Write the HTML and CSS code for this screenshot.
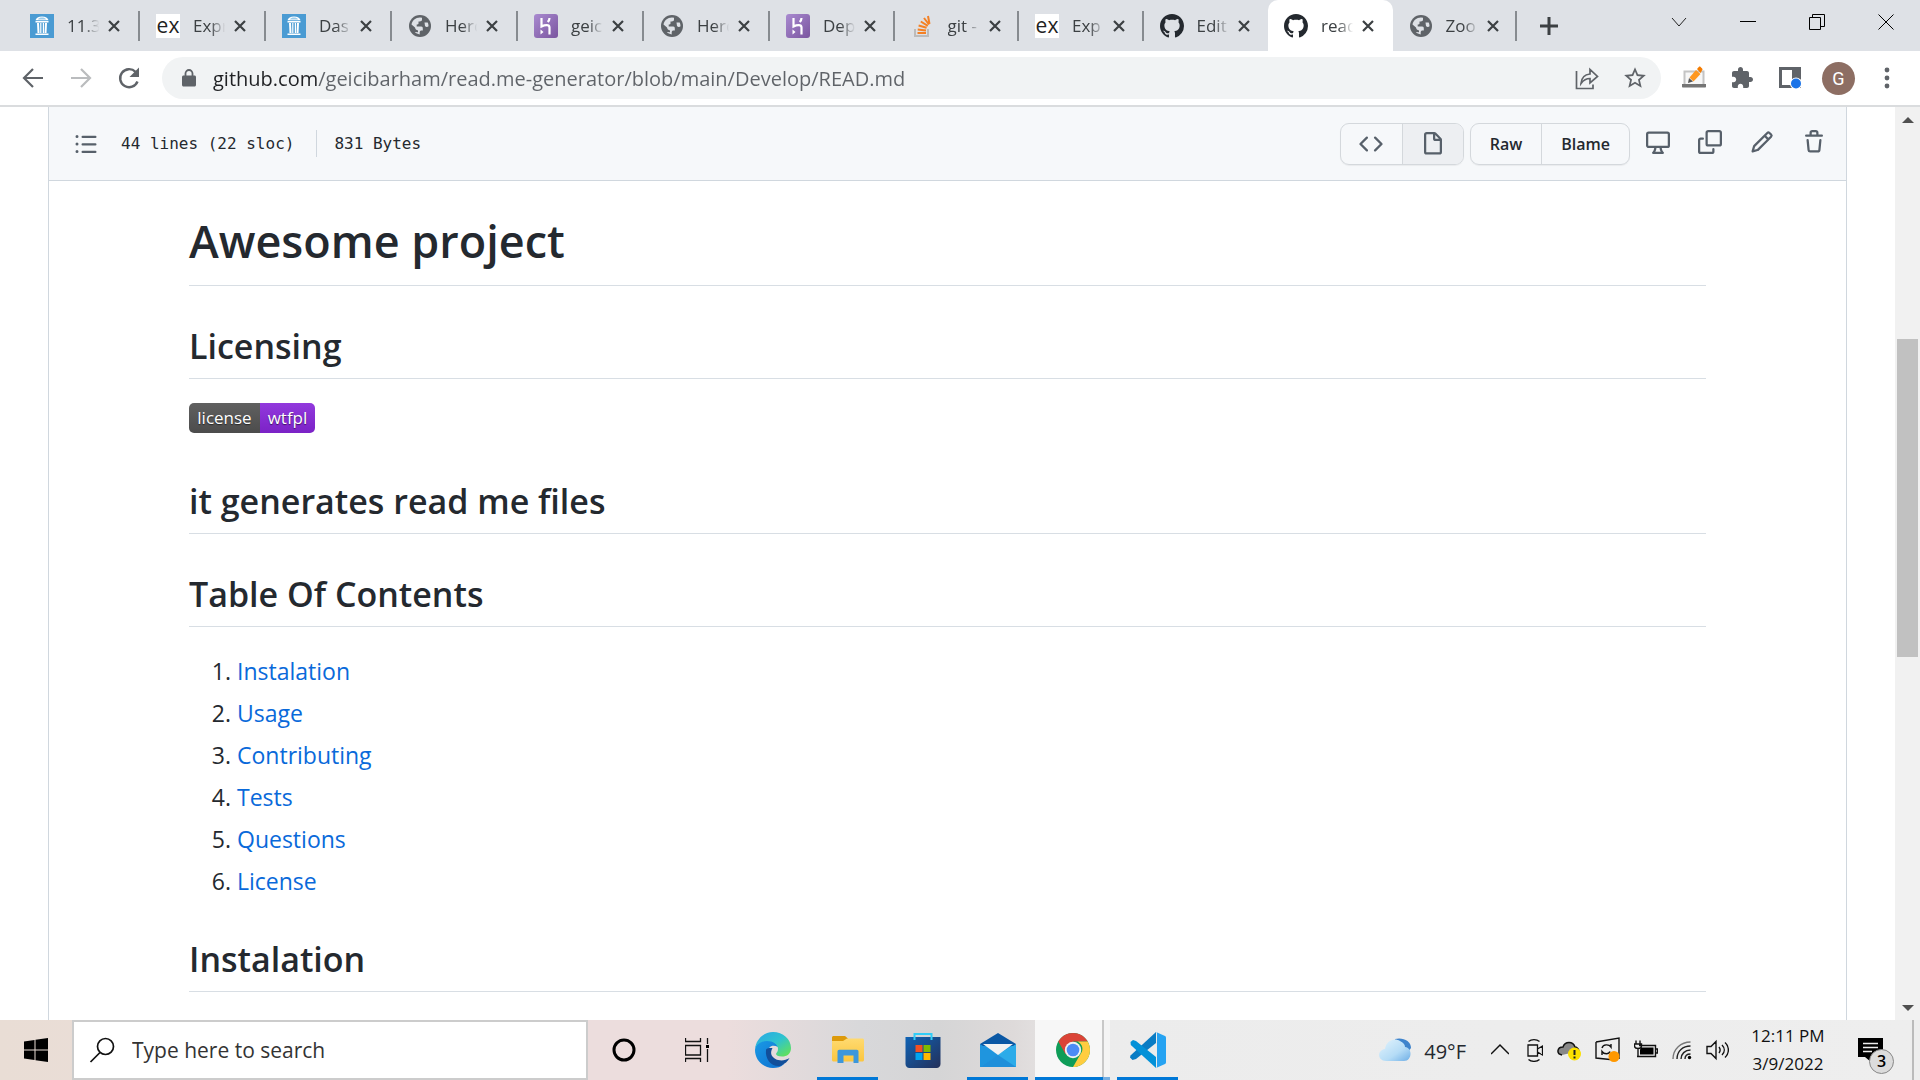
FILE: index.html
```html
<!DOCTYPE html>
<html lang="en">
<head>
<meta charset="utf-8">
<title>read.me-generator/READ.md</title>
<link rel="stylesheet" href="styles.css">
</head>
<body>
<svg class="sprite" aria-hidden="true">
  <defs>
    <linearGradient id="g-heroku" x1="0" y1="0" x2="1" y2="1"><stop offset="0" stop-color="#a98ad0"/><stop offset="1" stop-color="#7a559f"/></linearGradient>
    <linearGradient id="g-edge-top" x1="0" y1="0" x2="1" y2="1"><stop offset="0" stop-color="#2aa6e6"/><stop offset=".5" stop-color="#2fc3cf"/><stop offset="1" stop-color="#6be646"/></linearGradient>
    <linearGradient id="g-edge-low" x1="0" y1="0" x2="1" y2="1"><stop offset="0" stop-color="#1a9be6"/><stop offset="1" stop-color="#0f6fce"/></linearGradient>
    <linearGradient id="g-store" x1="0" y1="0" x2="1" y2="1"><stop offset="0" stop-color="#0f63b5"/><stop offset="1" stop-color="#24305a"/></linearGradient>
    <linearGradient id="g-cloud" x1="0" y1="0" x2="1" y2="1"><stop offset="0" stop-color="#e4f4fd"/><stop offset=".6" stop-color="#b5dcf6"/><stop offset="1" stop-color="#6eaee6"/></linearGradient>
    <linearGradient id="g-folder" x1="0" y1="0" x2="0" y2="1"><stop offset="0" stop-color="#ffda70"/><stop offset="1" stop-color="#fbc63f"/></linearGradient>
  </defs>
  <symbol id="i-canvas" viewBox="0 0 24 24"><path fill="#4a9bd3" d="M0 0h24v24H0z"/><path fill="#fff" d="M12 2.500c3.500 0 6 1.600 6.500 3.800h-13C6 4.100 8.500 2.500 12 2.500zM5.500 7h13v1.500h-13zM7 9h2l.5 10H7.500zM10.200 9h1.200v10h-1.200zM12.800 9H14v10h-1.200zM15 9h2l-.5 10h-2zM5.500 19.500h13V21h-13z"/><path fill="#9ccbea" d="M8 5.500C8.500 4 10 3.500 12 3.500s3.500.5 4 2z"/></symbol>
  <symbol id="i-globe" viewBox="0 0 24 24"><circle cx="12" cy="12" r="11" fill="#5f6368"/><path fill="#dee1e6" d="M3.500 10.500C4.200 6.500 7.500 3.600 12 3.500l2 .2v2.100c0 1-1 1.700-2.300 1.700h-1.200v2c0 .8-.8 1-1.800 1v2h4.500c1.300 0 1.600.7 1.600 2v2h-1.700c-1 0-1.400 1-1.400 2v1.900c-2-.1-3.500-1-4.900-2.300l3.200.2v-1.800c-1.800-.5-2.800-1.500-3-3zM16.500 8.500h3.200c.7 1.600.8 2.600.8 3.800-.8 1-2.700 1-3.500-.3z"/></symbol>
  <symbol id="i-heroku" viewBox="0 0 24 24"><rect width="24" height="24" rx="3" fill="url(#g-heroku)"/><path d="M7.500 4v8.500c3-1.500 8-2.500 8 1v7M15.500 4c0 1.700-.8 3-1.800 4" fill="none" stroke="#fff" stroke-width="2.200"/><path fill="#fff" d="M6.500 15.500l3 2.500-3 2.500z"/></symbol>
  <symbol id="i-stack" viewBox="0 0 24 24"><path d="M4 15v7h13v-7" fill="none" stroke="#bcbbbb" stroke-width="2"/><path stroke="#f48024" stroke-width="2" d="M6.500 19h8.500M6.700 15.500l8.300.9M7.600 11.500l8 2.200M9.800 7.500l7 4.300M13 4l5 6.500M17 2l1.500 8"/></symbol>
  <symbol id="i-github" viewBox="0 0 16 16"><path fill="#24292f" d="M8 0C3.580 0 0 3.580 0 8c0 3.540 2.290 6.530 5.470 7.590.4.070.55-.17.55-.38 0-.19-.01-.82-.01-1.490-2.010.37-2.530-.49-2.690-.94-.09-.23-.48-.94-.82-1.130-.28-.15-.68-.52-.01-.53.63-.01 1.080.58 1.230.82.72 1.210 1.870.87 2.330.66.07-.52.28-.87.51-1.070-1.780-.2-3.640-.89-3.640-3.950 0-.87.31-1.590.82-2.150-.08-.2-.36-1.020.08-2.120 0 0 .67-.21 2.200.82.64-.18 1.320-.27 2-.27s1.360.09 2 .27c1.530-1.040 2.200-.82 2.200-.82.44 1.100.16 1.920.08 2.120.51.56.82 1.270.82 2.150 0 3.070-1.870 3.750-3.650 3.950.29.25.54.73.54 1.480 0 1.070-.01 1.930-.01 2.200 0 .21.15.46.55.38A8.010 8.010 0 0016 8c0-4.420-3.580-8-8-8z"/></symbol>
  <symbol id="i-x" viewBox="0 0 14 14"><path d="M2 2l10 10M12 2L2 12" stroke="#3c4043" stroke-width="2.200"/></symbol>
</svg>

<header class="tabstrip">
  <nav class="tabs" aria-label="Tabs">
    <div class="tab"><svg class="favicon"><use href="#i-canvas"/></svg><span class="tab-title">11.3</span><button class="tab-close" aria-label="Close tab"><svg><use href="#i-x"/></svg></button></div>
    <div class="tab"><span class="favicon favicon-ex">ex</span><span class="tab-title">Expr</span><button class="tab-close" aria-label="Close tab"><svg><use href="#i-x"/></svg></button></div>
    <div class="tab"><svg class="favicon"><use href="#i-canvas"/></svg><span class="tab-title">Das</span><button class="tab-close" aria-label="Close tab"><svg><use href="#i-x"/></svg></button></div>
    <div class="tab"><svg class="favicon"><use href="#i-globe"/></svg><span class="tab-title">Hero</span><button class="tab-close" aria-label="Close tab"><svg><use href="#i-x"/></svg></button></div>
    <div class="tab"><svg class="favicon"><use href="#i-heroku"/></svg><span class="tab-title">geic</span><button class="tab-close" aria-label="Close tab"><svg><use href="#i-x"/></svg></button></div>
    <div class="tab"><svg class="favicon"><use href="#i-globe"/></svg><span class="tab-title">Hero</span><button class="tab-close" aria-label="Close tab"><svg><use href="#i-x"/></svg></button></div>
    <div class="tab"><svg class="favicon"><use href="#i-heroku"/></svg><span class="tab-title">Dep</span><button class="tab-close" aria-label="Close tab"><svg><use href="#i-x"/></svg></button></div>
    <div class="tab"><svg class="favicon"><use href="#i-stack"/></svg><span class="tab-title">git -</span><button class="tab-close" aria-label="Close tab"><svg><use href="#i-x"/></svg></button></div>
    <div class="tab"><span class="favicon favicon-ex">ex</span><span class="tab-title">Exp</span><button class="tab-close" aria-label="Close tab"><svg><use href="#i-x"/></svg></button></div>
    <div class="tab tab-before"><svg class="favicon"><use href="#i-github"/></svg><span class="tab-title">Edit</span><button class="tab-close" aria-label="Close tab"><svg><use href="#i-x"/></svg></button></div>
    <div class="tab tab-active"><svg class="favicon"><use href="#i-github"/></svg><span class="tab-title">read</span><button class="tab-close" aria-label="Close tab"><svg><use href="#i-x"/></svg></button></div>
    <div class="tab"><svg class="favicon"><use href="#i-globe"/></svg><span class="tab-title">Zoo</span><button class="tab-close" aria-label="Close tab"><svg><use href="#i-x"/></svg></button></div>
  </nav>
  <div class="strip-end">
    <button class="new-tab" aria-label="New tab"><svg width="18" height="18" viewBox="0 0 18 18"><path d="M9 0v18M0 9h18" stroke="#3c4043" stroke-width="3"/></svg></button>
    <div class="window-buttons">
      <button aria-label="Search tabs"><svg width="16" height="16" viewBox="0 0 16 16"><path d="M1 4l7 8 7-8" fill="none" stroke="#222"/></svg></button>
      <button aria-label="Minimize"><svg width="16" height="16" viewBox="0 0 16 16"><path d="M0 7.500h16" stroke="#000"/></svg></button>
      <button aria-label="Restore"><svg width="16" height="16" viewBox="0 0 16 16"><path d="M.5 3.500h11v12H.5zM3.500 3.500v-3h12v12h-4" fill="none" stroke="#000"/></svg></button>
      <button aria-label="Close"><svg width="16" height="16" viewBox="0 0 16 16"><path d="M0.500 .5l15 15M15.500 .5l-15 15" stroke="#000"/></svg></button>
    </div>
  </div>
</header>

<div class="toolbar">
  <div class="nav-buttons">
    <button aria-label="Back"><svg width="24" height="24" viewBox="0 0 24 24"><path d="M22 12H3M12 3l-9 9 9 9" fill="none" stroke="#5f6368" stroke-width="2.200"/></svg></button>
    <button aria-label="Forward"><svg width="24" height="24" viewBox="0 0 24 24"><path d="M2 12h19M12 3l9 9-9 9" fill="none" stroke="#babcbe" stroke-width="2.200"/></svg></button>
    <button aria-label="Reload"><svg width="24" height="24" viewBox="0 0 24 24"><path d="M20.500 15.500A9 9 0 1 1 18.500 5.800" fill="none" stroke="#5f6368" stroke-width="2.400"/><path d="M22 1.500V11h-9.500z" fill="#5f6368"/></svg></button>
  </div>
  <form class="omnibox">
    <svg width="14" height="18" viewBox="0 0 14 18"><path fill="#5f6368" d="M1.500 6.500h11c.8 0 1.500.7 1.500 1.500v8c0 .8-.7 1.500-1.500 1.500h-11C.7 17.500 0 16.800 0 16V8c0-.8.7-1.500 1.500-1.500z"/><path d="M3.500 7V4.500a3.500 3.500 0 0 1 7 0V7" fill="none" stroke="#5f6368" stroke-width="1.800"/></svg>
    <input class="url" type="text" aria-label="Address" value="github.com/geicibarham/read.me-generator/blob/main/Develop/READ.md">
    <button type="button" aria-label="Share"><svg width="24" height="24" viewBox="0 0 24 24"><path d="M1.500 5v17.500H18v-4M6 17.500c.5-6 3.500-9 9-9.500V3.500l7.500 7-7.500 6.500v-4.500c-4 0-6.500 1.500-9 5z" fill="none" stroke="#5f6368" stroke-width="1.700"/></svg></button>
    <button type="button" aria-label="Bookmark"><svg width="26" height="26" viewBox="0 0 24 24"><path fill="#5f6368" d="M22 9.240l-7.190-.62L12 2 9.190 8.630 2 9.240l5.460 4.730L5.820 21 12 17.270 18.180 21l-1.630-7.030L22 9.240zM12 15.400l-3.760 2.270 1-4.280-3.320-2.880 4.380-.38L12 6.100l1.710 4.040 4.380.38-3.320 2.880 1 4.280L12 15.400z"/></svg></button>
  </form>
  <div class="extensions">
    <button aria-label="Page editor"><svg width="24" height="24" viewBox="0 0 24 24"><path d="M2.500 18V5.500h19V18" fill="#f7f7f7" stroke="#c4c4c4" stroke-width="2"/><path fill="#757575" d="M0 18h24v2.500c0 .6-.4 1-1 1H1c-.6 0-1-.4-1-1z"/><path fill="#ff9820" d="M14 4l4.500 4-7 7.500-4-4z"/><path fill="#555" d="M7 12l4 3.500-5 1.500z"/><path fill="#f57c00" d="M15 3l1.800-2c.5-.6 1.200-.6 1.800 0l1.500 1.500c.6.600.6 1.200 0 1.800L18.500 7z"/></svg></button>
    <button aria-label="Extensions"><svg width="24" height="24" viewBox="0 0 24 24"><path fill="#5f6368" d="M20.500 11H19V7c0-1.100-.9-2-2-2h-4V3.500C13 2.120 11.880 1 10.500 1S8 2.120 8 3.500V5H4c-1.100 0-1.990.9-1.990 2v3.800H3.500c1.490 0 2.700 1.210 2.700 2.700s-1.210 2.700-2.700 2.700H2V20c0 1.100.9 2 2 2h3.800v-1.500c0-1.490 1.210-2.700 2.700-2.700 1.490 0 2.700 1.210 2.700 2.700V22H17c1.100 0 2-.9 2-2v-4h1.500c1.380 0 2.500-1.120 2.500-2.500S21.880 11 20.500 11z"/></svg></button>
    <button aria-label="Side panel"><svg width="24" height="24" viewBox="0 0 24 24"><path fill="#5f6368" fill-rule="evenodd" d="M1 1h22v21H1zM4 4v15h10V4z"/><circle cx="18" cy="17.500" r="6" fill="#fff"/><circle cx="18" cy="17.500" r="5" fill="#1a73e8"/></svg></button>
    <button class="avatar" aria-label="Profile">G</button>
    <button aria-label="Menu"><svg width="24" height="24" viewBox="0 0 24 24" fill="#5f6368"><circle cx="12" cy="4" r="2.400"/><circle cx="12" cy="12" r="2.400"/><circle cx="12" cy="20" r="2.400"/></svg></button>
  </div>
</div>

<div class="viewport">
  <main class="page">
    <section class="file-box">
      <div class="file-header">
        <div class="file-info">
          <button class="icon-button" aria-label="Outline"><svg width="24" height="24" viewBox="0 0 16 16"><path d="M2 4a1 1 0 100-2 1 1 0 000 2zm3.750-1.500a.75.75 0 000 1.500h8.500a.75.75 0 000-1.500h-8.500zm0 5a.75.75 0 000 1.500h8.500a.75.75 0 000-1.500h-8.500zm0 5a.75.75 0 000 1.500h8.500a.75.75 0 000-1.500h-8.500zM3 8a1 1 0 11-2 0 1 1 0 012 0zm-1 6a1 1 0 100-2 1 1 0 000 2z"/></svg></button>
          <span class="lines">44 lines (22 sloc)</span>
          <span class="bytes">831 Bytes</span>
        </div>
        <div class="file-actions">
          <div class="button-group">
            <button class="view-button" aria-label="Source"><svg width="24" height="24" viewBox="0 0 16 16"><path d="M4.720 3.220a.75.75 0 011.060 1.060L2.060 8l3.720 3.720a.75.75 0 11-1.060 1.060L.47 8.530a.75.75 0 010-1.060l4.250-4.250zm6.560 0a.75.75 0 10-1.060 1.060L13.940 8l-3.720 3.720a.75.75 0 101.060 1.060l4.250-4.250a.75.75 0 000-1.060l-4.250-4.250z"/></svg></button>
            <button class="view-button selected" aria-label="Rendered"><svg width="24" height="24" viewBox="0 0 16 16"><path d="M3.750 1.500a.25.25 0 00-.25.25v11.500c0 .138.112.25.25.25h8.500a.25.25 0 00.25-.25V6H9.750A1.750 1.750 0 018 4.250V1.500H3.750zm5.750.56v2.190c0 .138.112.25.25.25h2.190L9.500 2.060zM2 1.750C2 .784 2.784 0 3.750 0h5.086c.464 0 .909.184 1.237.513l3.414 3.414c.329.328.513.773.513 1.237v8.086A1.750 1.750 0 0112.250 15h-8.500A1.750 1.750 0 012 13.250V1.750z"/></svg></button>
          </div>
          <div class="button-group">
            <button class="text-button">Raw</button>
            <button class="text-button">Blame</button>
          </div>
          <div class="icon-row">
            <button class="icon-button" aria-label="Open in desktop"><svg width="24" height="24" viewBox="0 0 16 16"><path d="M1.750 2.500h12.500a.25.25 0 01.25.25v7.500a.25.25 0 01-.25.25H1.750a.25.25 0 01-.25-.25v-7.500a.25.25 0 01.25-.25zM14.250 1H1.750A1.750 1.750 0 000 2.750v7.500C0 11.216.784 12 1.750 12h3.727c-.1 1.041-.52 1.872-1.292 2.757A.75.75 0 004.750 16h6.500a.75.75 0 00.565-1.243c-.772-.885-1.193-1.716-1.292-2.757h3.727A1.750 1.750 0 0016 10.250v-7.500A1.750 1.750 0 0014.250 1zM9.018 12H6.982a5.720 5.720 0 01-.765 2.500h3.566a5.720 5.720 0 01-.765-2.500z" fill-rule="evenodd"/></svg></button>
            <button class="icon-button" aria-label="Copy"><svg width="24" height="24" viewBox="0 0 16 16"><path fill-rule="evenodd" d="M0 6.750C0 5.784.784 5 1.750 5h1.500a.75.75 0 010 1.500h-1.500a.25.25 0 00-.25.25v7.500c0 .138.112.25.25.25h7.500a.25.25 0 00.25-.25v-1.500a.75.75 0 011.500 0v1.500A1.750 1.750 0 019.250 16h-7.500A1.750 1.750 0 010 14.250v-7.500zM5 1.750C5 .784 5.784 0 6.750 0h7.500C15.216 0 16 .784 16 1.750v7.500A1.750 1.750 0 0114.250 11h-7.500A1.750 1.750 0 015 9.250v-7.500zm1.750-.25a.25.25 0 00-.25.25v7.500c0 .138.112.25.25.25h7.500a.25.25 0 00.25-.25v-7.500a.25.25 0 00-.25-.25h-7.500z"/></svg></button>
            <button class="icon-button" aria-label="Edit"><svg width="24" height="24" viewBox="0 0 16 16"><path fill-rule="evenodd" d="M11.013 1.427a1.750 1.750 0 012.474 0l1.086 1.086a1.750 1.750 0 010 2.474l-8.610 8.610c-.21.21-.47.364-.756.445l-3.251.93a.75.75 0 01-.927-.928l.929-3.250a1.750 1.750 0 01.445-.758l8.610-8.610zm1.414 1.060a.25.25 0 00-.354 0L10.811 3.750l1.439 1.440 1.263-1.263a.25.25 0 000-.354l-1.086-1.086zM11.189 6.250L9.750 4.810l-6.286 6.287a.25.25 0 00-.064.108l-.558 1.953 1.953-.558a.249.249 0 00.108-.064l6.286-6.286z"/></svg></button>
            <button class="icon-button" aria-label="Delete"><svg width="24" height="24" viewBox="0 0 16 16"><path fill-rule="evenodd" d="M6.500 1.750a.25.25 0 01.25-.25h2.500a.25.25 0 01.25.25V3h-3V1.750zm4.500 0V3h2.250a.75.75 0 010 1.500H2.750a.75.75 0 010-1.500H5V1.750C5 .784 5.784 0 6.750 0h2.500C10.216 0 11 .784 11 1.750zM4.496 6.675a.75.75 0 10-1.492.15l.66 6.600A1.750 1.750 0 005.405 15h5.190c.9 0 1.652-.681 1.741-1.576l.66-6.600a.75.75 0 00-1.492-.149l-.66 6.600a.25.25 0 01-.249.225h-5.190a.25.25 0 01-.249-.225l-.66-6.600z"/></svg></button>
          </div>
        </div>
      </div>
      <article class="markdown">
        <h1>Awesome project</h1>
        <h2>Licensing</h2>
        <p class="badge-line"><a class="badge" href="#license"><span class="badge-label">license</span><span class="badge-value">wtfpl</span></a></p>
        <h2>it generates read me files</h2>
        <h2>Table Of Contents</h2>
        <ol>
          <li><a href="#instalation">Instalation</a></li>
          <li><a href="#usage">Usage</a></li>
          <li><a href="#contributing">Contributing</a></li>
          <li><a href="#tests">Tests</a></li>
          <li><a href="#questions">Questions</a></li>
          <li><a href="#license">License</a></li>
        </ol>
        <h2 id="instalation">Instalation</h2>
      </article>
    </section>
  </main>
  <div class="scrollbar">
    <svg width="12" height="7" viewBox="0 0 12 7"><path d="M0 7l6-6 6 6z" fill="#505050"/></svg>
    <div class="track"><div class="thumb"></div></div>
    <svg width="12" height="7" viewBox="0 0 12 7"><path d="M0 0l6 6 6-6z" fill="#505050"/></svg>
  </div>
</div>

<footer class="taskbar">
  <button class="start" aria-label="Start"><svg width="24" height="24" viewBox="0 0 24 24"><path d="M0 3.500L10.500 2v9.500H0zM11.500 1.800L24 0v11.500H11.500zM0 12.500h10.500V22L0 20.500zM11.500 12.500H24V24l-12.500-1.800z"/></svg></button>
  <label class="search">
    <svg width="26" height="26" viewBox="0 0 26 26"><circle cx="16.500" cy="9.500" r="8" fill="none" stroke="#111" stroke-width="1.700"/><path d="M11 15.500L1.500 25" stroke="#111" stroke-width="1.700"/></svg>
    <input type="text" placeholder="Type here to search" aria-label="Search">
  </label>
  <div class="apps">
    <button class="app" aria-label="Cortana"><svg width="24" height="24" viewBox="0 0 24 24"><circle cx="12" cy="12" r="10" fill="none" stroke="#000" stroke-width="3"/></svg></button>
    <button class="app" aria-label="Task view"><svg width="26" height="24" viewBox="0 0 26 24"><path d="M.5 7.500h15v9.500H.5zM.5 0v3.500h15V0M.5 24v-3.500h15V24M22.500 0v6M22.500 11v13" fill="none" stroke="#111" stroke-width="1.300"/><path d="M21 7h3v3h-3z"/></svg></button>
    <button class="app" aria-label="Edge"><svg width="36" height="36" viewBox="0 0 36 36"><path fill="url(#g-edge-low)" d="M0 18C1 8 11 5 17 9c4 2 6 4 6 6-6-3-10 0-10 5 0 8 8 13 16 12-3 3-7 4-11 4C8 36 0 28 0 18z"/><path fill="#124f9a" d="M11 18c-1 9 5 17 14 16 5-2 8-5 9.500-8-6 4-15 3-18-3-1-3 0-5 1-7-3 0-6 0-6.500 2z"/><path fill="url(#g-edge-top)" d="M0 17C1 7 9 0 18 0c10 0 18 7 18 16 0 6-4 8.500-9 8.500-4 0-6-1.500-6-2.500s2-2 2-5c0-5-5-8-11-8C6 9 1 13 0 17z"/></svg></button>
    <button class="app running" aria-label="File Explorer"><svg width="32" height="28" viewBox="0 0 32 28"><path fill="#dd9a0b" d="M0 1.500C0 .7.700 0 1.500 0H13l3 2.500L13 6H0z"/><path fill="url(#g-folder)" d="M0 5h11l4-2.500h15.500c.8 0 1.500.7 1.500 1.500v20c0 .8-.7 1.500-1.500 1.500h-29C.7 25.500 0 24.800 0 24z"/><path fill="#3c97dc" d="M5.500 27V15.500c0-1 .8-1.700 1.700-1.700h17.600c1 0 1.700.7 1.700 1.700V27h-5v-7.500h-10V27z"/></svg></button>
    <button class="app" aria-label="Store"><svg width="36" height="36" viewBox="0 0 36 36"><path fill="url(#g-store)" d="M.5 5h35v27c0 2-1.500 4-4 4h-27c-2.500 0-4-2-4-4z"/><path d="M9.500 8V2h17v6" fill="none" stroke="#31cdf7" stroke-width="2"/><path fill="#f25022" d="M10.500 13h7v7h-7z"/><path fill="#7fba00" d="M18.500 13h7v7h-7z"/><path fill="#00a4ef" d="M10.500 21h7v7h-7z"/><path fill="#ffb900" d="M18.500 21h7v7h-7z"/></svg></button>
    <button class="app running" aria-label="Mail"><svg width="36" height="34" viewBox="0 0 36 34"><path fill="#0a57a4" d="M0 11L18 0l18 11v4H0z"/><path fill="#1f95de" d="M0 11h36v23H0z"/><path fill="#37c3f3" d="M36 11v23L18 22z"/><path fill="#2cabe9" d="M0 34l36-23v3L36 34z"/><path fill="#1f8fda" d="M18 22l18 12H0z"/><path fill="#0a57a4" d="M0 11h36l-3 2H3z"/><path fill="#f2f2f2" d="M3 11h30L18 22z"/></svg></button>
    <button class="app running current" aria-label="Chrome"><svg width="34" height="34" viewBox="0 0 34 34"><circle cx="17" cy="17" r="17" fill="#0f9d58"/><path fill="#db4437" d="M2.300 8.500A17 17 0 0 1 31.700 8.500H17L9.600 21.200z"/><path fill="#ffcd40" d="M31.700 8.500A17 17 0 0 1 17 34l7.400-12.800a8 8 0 0 0-3-12.700z"/><circle cx="17" cy="17" r="8.200" fill="#f1f1f1"/><circle cx="17" cy="17" r="6.300" fill="#4c8bf5"/></svg></button>
    <button class="app running" aria-label="Visual Studio Code"><svg width="36" height="36" viewBox="0 0 36 36"><path fill="#0a7cc4" d="M26 0v11L6 27l-3.500 1L0 25.500l.5-2z"/><path fill="#0391d8" d="M26 36V25L6 9 3 8 .5 10l.3 3z"/><path fill="#26a3f2" d="M26 0l9 4c.7.4 1 1 1 2v24c0 1-.3 1.600-1 2l-9 4c1-.5 1-1 1-2V2c0-1 0-1.500-1-2z"/></svg></button>
  </div>
  <div class="tray">
    <button class="weather"><svg width="32" height="24" viewBox="0 0 32 24"><path fill="#3f84cc" d="M16 1c8-2 16 2 16 9l-3 4-12-8z"/><path fill="url(#g-cloud)" d="M7 23c-9 0-9-11-1-12C7 3 15-1 21 3c4 2 5 4 5 6 8 1 7 14-1 14z"/></svg><span>49°F</span></button>
    <div class="tray-icons">
      <button aria-label="Show hidden icons"><svg width="18" height="24" viewBox="0 0 18 24"><path d="M0 16l9-9 9 9" fill="none" stroke="#111" stroke-width="1.500"/></svg></button>
      <button aria-label="Meet now"><svg width="16" height="24" viewBox="0 0 16 24"><path d="M1 7h9.500v11H1zM10.500 11L15.500 8v9l-5-3M1.500 3.500c3-2.500 8-2.500 11 0M1.500 21.500c3 2.500 8 2.500 11 0" fill="none" stroke="#111" stroke-width="1.300"/></svg></button>
      <button aria-label="OneDrive"><svg width="24" height="24" viewBox="0 0 24 24"><path d="M5 17c-6-1-5-8 1-8C8 3 16 3 18 9c2 0 3 1 4 4" fill="#888" stroke="#111" stroke-width="1.500"/><circle cx="17.500" cy="16" r="6.500" fill="#fce100"/><path d="M17.500 12v5M17.500 18.500v2" stroke="#222" stroke-width="2"/></svg></button>
      <button aria-label="Updates"><svg width="25" height="26" viewBox="0 0 25 26"><path d="M1 5l23-4v21M1 5v16l14 1.500M7 11c1-4 7-4 9-1V7M7 18v-3.500c2 3 7 3 8 0" fill="none" stroke="#111" stroke-width="1.400"/><circle cx="19" cy="19.500" r="5.500" fill="#ff9800"/></svg></button>
      <button aria-label="Battery"><svg width="24" height="24" viewBox="0 0 24 24"><path d="M5 7.500h16.500v11H3M22 11h1.500v4H22M2 2.500V6M6 2.500V6M.5 6h7v2c0 1.500-1.500 2.500-3.500 2.500S.5 9.500.5 8zM4 10.500v8" fill="none" stroke="#111" stroke-width="1.400"/><path d="M7 9.500h12.500v7H6v-5z"/></svg></button>
      <button aria-label="Wi-Fi"><svg width="20" height="24" viewBox="0 0 20 24"><g fill="none" stroke-width="1.400"><path d="M1 21C1 11 9 4 18.500 4" stroke="#777"/><path d="M5 21C5 13 11 8 18.500 8M9 21c0-5 4-9 9.500-9M13 21c0-3 2-5 5.500-5" stroke="#222"/></g><circle cx="17.500" cy="19.500" r="1.700"/></svg></button>
      <button aria-label="Volume"><svg width="23" height="24" viewBox="0 0 23 24"><path d="M1 8.500h4l5-5v17l-5-5H1zM13 9c1.500 2 1.500 4 0 6M16 7c3 3 3 7 0 10M19 4.500c4.500 4 4.500 11 0 15" fill="none" stroke="#111" stroke-width="1.400"/></svg></button>
    </div>
    <button class="clock"><span>12:11 PM</span><span>3/9/2022</span></button>
    <button class="notifications" aria-label="Notifications"><svg width="25" height="24" viewBox="0 0 25 24"><path d="M0 0h25v19H13v5l-6-5H0z"/><path d="M5 5.500h15M5 9.500h15M5 13.500h9" stroke="#eee" stroke-width="1.500"/></svg><span class="count">3</span></button>
  </div>
</footer>
</body>
</html>
```
FILE: styles.css
```css
* { box-sizing: border-box; }

body {
  margin: 0;
  height: 100vh;
  overflow: hidden;
  display: flex;
  flex-direction: column;
  font-family: "Open Sans", "Noto Sans", sans-serif;
  color: #24292f;
  background: #fff;
}

button {
  margin: 0;
  padding: 0;
  border: 0;
  background: none;
  font: inherit;
  color: inherit;
  display: flex;
  align-items: center;
  justify-content: center;
}

input {
  min-width: 0;
  padding: 0;
  border: 0;
  outline: 0;
  background: none;
  font: inherit;
}

svg { display: block; flex: none; }
.sprite { position: absolute; width: 0; height: 0; }

/* Tab strip */
.tabstrip {
  flex: none;
  display: flex;
  height: 51px;
  padding-left: 14px;
  background: #dee1e6;
}
.tabs { flex: 1; display: flex; min-width: 0; }
.tab {
  flex: 1;
  min-width: 0;
  display: flex;
  align-items: center;
  padding-left: 16px;
  background: linear-gradient(#878b90, #878b90) right center / 2px 30px no-repeat;
}
.tab:nth-child(-n+6) { flex: none; width: 126px; }
.tab.tab-before { background: none; }
.tab.tab-active { background: #fff; border-radius: 10px 10px 0 0; }
.favicon { flex: none; width: 24px; height: 24px; }
.favicon-ex {
  background: #fff;
  color: #222;
  font-size: 21px;
  line-height: 22px;
  text-align: center;
}
.tab-title {
  width: 34px;
  margin-left: 13px;
  overflow: hidden;
  white-space: nowrap;
  font-size: 17px;
  color: #3c4043;
  mask-image: linear-gradient(90deg, #000 50%, transparent 95%);
}
.tab-close { margin-left: 6px; }
.tab-close svg { width: 14px; height: 14px; }
.strip-end {
  flex: none;
  width: 403px;
  display: flex;
  align-items: center;
  justify-content: space-between;
  padding-left: 23px;
}
.window-buttons { display: flex; align-self: flex-start; }
.window-buttons button { width: 69px; height: 43px; }

/* Toolbar */
.toolbar {
  flex: none;
  display: flex;
  align-items: center;
  height: 56px;
  padding-left: 21px;
  border-bottom: 2px solid #dadcde;
  background: #fff;
}
.nav-buttons { display: flex; gap: 24px; width: 141px; }
.omnibox {
  flex: 1;
  display: flex;
  align-items: center;
  height: 42px;
  margin: 0;
  padding: 0 13px 0 20px;
  border-radius: 21px;
  background: #f1f3f4;
}
.url {
  flex: 1;
  margin-left: 17px;
  font-size: 20px;
  color: #5f6368;
  background: linear-gradient(90deg, #202124 105px, #5f6368 105px);
  background-clip: text;
  -webkit-text-fill-color: transparent;
}
.omnibox button { margin-left: 23px; }
.extensions {
  display: flex;
  align-items: center;
  gap: 24px;
  padding: 0 21px;
}
.extensions .avatar {
  width: 33px;
  height: 33px;
  margin: 0 -4px;
  border-radius: 50%;
  background: #8d6e63;
  color: #fff;
  font-family: Roboto, sans-serif;
  font-size: 18px;
}

/* Page */
.viewport { flex: 1; min-height: 0; display: flex; overflow: hidden; }
.page { flex: 1; padding: 0 48px; }
.file-box {
  min-height: 100%;
  border: solid #d0d7de;
  border-width: 0 1px;
}
.file-header {
  display: flex;
  justify-content: space-between;
  height: 74px;
  padding: 0 20px 0 25px;
  background: #f6f8fa;
  border-bottom: 1px solid #d0d7de;
}
.file-info {
  display: flex;
  align-items: center;
  font: 16px/27px "DejaVu Sans Mono", monospace;
}
.lines { margin-left: 23px; padding-right: 22px; border-right: 1px solid #d0d7de; }
.bytes { padding-left: 17px; }
.icon-button { fill: #57606a; }
.file-actions { display: flex; align-items: center; gap: 6px; }
.button-group {
  display: flex;
  height: 42px;
  border: 1px solid #d4d8dc;
  border-radius: 9px;
  overflow: hidden;
  box-shadow: 0 1px 1px #1f23280f;
}
.button-group button + button { border-left: 1px solid #d4d8dc; }
.view-button { width: 61px; fill: #57606a; }
.view-button.selected { background: #edeff2; }
.text-button { padding: 0 19px; font-size: 16px; font-weight: 600; }
.icon-row { display: flex; gap: 28px; padding: 0 0 3px 10px; }

.markdown { padding: 30px 140px; font-size: 23px; line-height: 36px; }
h1, h2 { margin: 36px 0 24px; font-weight: 600; border-bottom: 1px solid #d8dee4; }
h1 { margin-top: 0; padding-bottom: 14px; font-size: 45px; line-height: 60px; }
h2 { padding-bottom: 8px; font-size: 34px; line-height: 48px; }
.markdown p { margin: 0; }
.badge-line { display: flex; height: 38px; }
.badge {
  display: flex;
  height: 30px;
  border-radius: 5px;
  overflow: hidden;
  color: #fff;
  font-size: 17px;
  line-height: 30px;
  text-decoration: none;
  text-shadow: 0 1px 1px #0008;
}
.badge span { text-align: center; }
.badge-label { width: 71px; background: linear-gradient(#606060, #4c4c4c); }
.badge-value { width: 55px; background: linear-gradient(#9239dd, #7b22c6); }
ol { margin: 26px 0 0; padding-left: 48px; }
li + li { margin-top: 6px; }
li a { color: #0969da; text-decoration: none; }

.scrollbar {
  display: flex;
  flex-direction: column;
  align-items: center;
  width: 25px;
  padding: 9px 0 8px;
  background: #f1f1f1;
}
.track { flex: 1; width: 21px; padding-top: 216px; }
.thumb { height: 37%; min-height: 318px; background: #c1c1c1; }

/* Taskbar */
.taskbar {
  flex: none;
  display: flex;
  height: 60px;
  border-right: 6px solid #eee;
  box-shadow: inset -2px 0 #bbb;
  background: linear-gradient(90deg, #e9ddd5 0, #ecdddd 30%, #ecdddd 38%, #d8d8da 45%, #d5d5d6 49%, #dedada 53%, #ececec 57%, #eee 100%);
}
.start { width: 72px; }
.search {
  display: flex;
  align-items: center;
  width: 516px;
  padding-left: 15px;
  gap: 17px;
  border: 2px solid #ccc;
  background: #fff;
}
.search input { flex: 1; font-size: 21px; color: #333; }
.search input::placeholder { color: #333; opacity: 1; }
.apps { display: flex; }
.app { width: 75px; }
.app:first-child { width: 72px; }
.app.running {
  background: linear-gradient(#0078d7, #0078d7) center bottom / 61px 3px no-repeat;
}
.app.current {
  background:
    linear-gradient(#0078d7, #0078d7) left bottom / 68px 3px no-repeat,
    linear-gradient(#76aee0, #76aee0) right bottom / 7px 3px no-repeat,
    linear-gradient(90deg, #f7f7f7 67px, #c8c8c8 67px, #c8c8c8 69px, #f4f4f4 69px);
}
.tray { flex: 1; display: flex; justify-content: flex-end; align-items: center; padding-right: 31px; }
.tray .weather { gap: 13px; font-size: 20px; }
.tray .weather span { line-height: 24px; padding-top: 4px; }
.tray-icons { display: flex; align-items: center; gap: 14px; margin-left: 25px; }
.tray-icons button:first-child { padding-right: 4px; }
.clock {
  flex-direction: column;
  width: 118px;
  font-size: 17px;
  line-height: 28px;
  color: #111;
}
.notifications { position: relative; margin-left: 11px; }
.count {
  position: absolute;
  left: 11px;
  top: 11px;
  width: 25px;
  height: 25px;
  border: 1px solid #888;
  border-radius: 50%;
  background: #dcdcdc;
  color: #000;
  font-size: 16px;
  font-weight: 600;
  line-height: 22px;
  text-align: center;
}
```
